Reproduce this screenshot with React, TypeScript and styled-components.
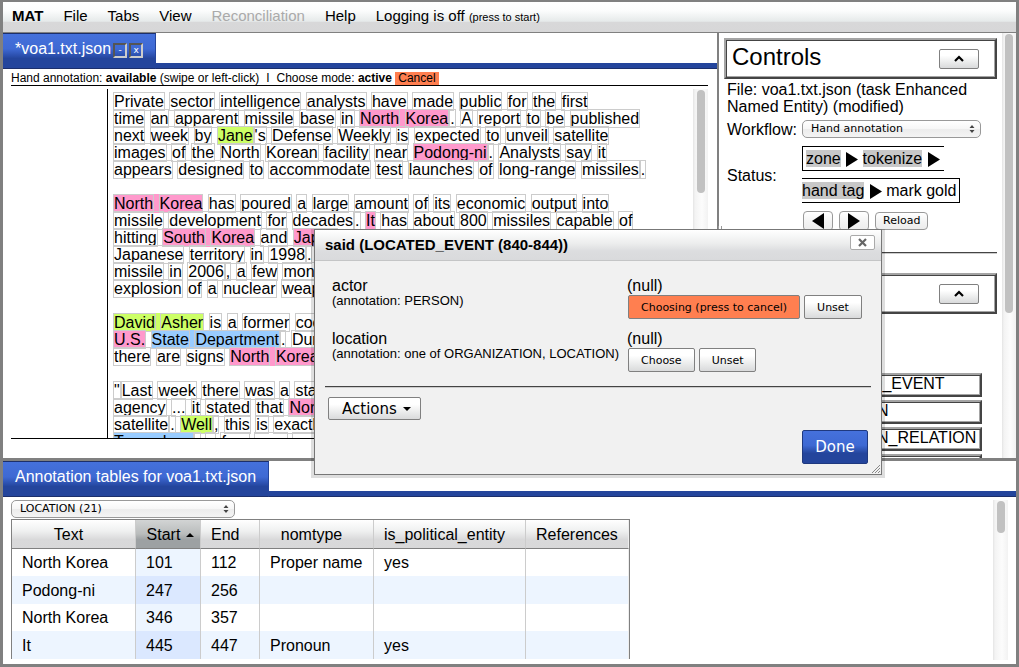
import React from "react";
import styled, { createGlobalStyle } from "styled-components";

const sans = '"Liberation Sans", Arial, Helvetica, sans-serif';
const ui = '"DejaVu Sans", "Lucida Grande", sans-serif';

const Global = createGlobalStyle`
  *, *::before, *::after { box-sizing: border-box; }
  body { margin: 0; background: #808080; color: #000; font: 16px/17px ${sans}; }
  button, select { margin: 0; color: inherit; }
  p, h1, h2, ul, dl, dd { margin: 0; padding: 0; font-weight: normal; }
  ul { list-style: none; }
`;

/* ---------- shell ---------- */

const Shell = styled.div`
  height: 100vh;
  min-height: 480px;
  padding: 2px 3px 3px;
  display: grid;
  grid-template-rows: auto minmax(0, 1fr) 203px;
  overflow: hidden;
`;

const MenuBar = styled.nav`
  display: flex;
  align-items: center;
  gap: 20px;
  height: 31px;
  padding: 0 9px 2px;
  border-bottom: 1px solid #808080;
  background: linear-gradient(#fff 0%, #fbfcfc 30%, #e6eaea 64%, #d8d8d9 68%, #d7d7d8 100%);
`;

const MenuItem = styled.button<{ $bold?: boolean }>`
  padding: 0;
  border: 0;
  background: none;
  font: ${(p) => (p.$bold ? "bold" : "normal")} 15px/18px ${sans};
  white-space: nowrap;
  &:disabled { color: #aaa; }
  small { font-size: 11px; }
`;

const Upper = styled.div`
  display: grid;
  grid-template-columns: minmax(0, 1fr) 2px 297px;
  min-height: 0;
  border-bottom: 3px solid #808080;
`;

const Divider = styled.div`
  position: relative;
  background: #808080;
  &::after {
    content: "";
    position: absolute;
    top: calc(50% - 20px);
    left: 1px;
    width: 4px;
    height: 40px;
    background: #fff;
    border: solid #999;
    border-width: 0 1px;
  }
`;

const Panel = styled.section`
  display: flex;
  flex-direction: column;
  min-width: 0;
  min-height: 0;
  background: #fff;
`;

const TabStrip = styled.div`
  display: flex;
  height: 36px;
  flex: none;
  background: linear-gradient(#fff 30px, #24459c 30px, #24459c 35px, #1c2f6b 35px);
`;

const Tab = styled.div`
  display: flex;
  align-items: center;
  height: 36px;
  padding: 0 12px 6px;
  color: #fff;
  font-size: 16px;
  white-space: nowrap;
  border: solid #1c2f6b;
  border-width: 1px 1px 1px 0;
  border-right-color: #24459c;
  background: linear-gradient(#4571dc 0%, #3e69d3 44%, #2b4fad 64%, #24459c 72%, #24459c 100%);
`;

const TabButton = styled.button`
  width: 14px;
  height: 15px;
  margin: 5px 0 0 2px;
  padding: 0;
  border: 2px solid;
  border-color: #555 #ccc #ccc #555;
  background: none;
  font: 9px/9px ${ui};
`;

/* ---------- scroll bars ---------- */

const Track = styled.div<{ $w: number }>`
  flex: none;
  display: flex;
  justify-content: center;
  width: ${(p) => p.$w}px;
  padding-top: 1px;
  background: linear-gradient(90deg, #e4e4e4 0, #f3f3f3 2px, #fcfcfc 60%, #f2f2f2 100%);
`;

const Thumb = styled.div<{ $h: number }>`
  width: 8px;
  height: ${(p) => p.$h}px;
  border-radius: 4px;
  background: #c1c1c1;
`;

/* ---------- document ---------- */

const DocBody = styled.div`
  flex: 1;
  min-height: 0;
  display: flex;
  flex-direction: column;
  padding: 2px 9px 19px 8px;
`;

const StatusLine = styled.div`
  flex: none;
  height: 15px;
  padding-top: 1px;
  border-bottom: 1px solid #000;
  font-size: 12px;
  line-height: 13px;
  white-space: nowrap;
`;

const Separator = styled.span`
  padding: 0 7px;
`;

const CancelLink = styled.button`
  height: 13px;
  padding: 0 3px;
  border: 0;
  background: #ff7f50;
  font: 12px/13px ${sans};
  vertical-align: bottom;
`;

const DocScroll = styled.div`
  flex: 1;
  min-height: 0;
  display: flex;
  margin-top: 3px;
  padding-left: 96px;
  border-bottom: 1px solid #000;
  overflow: hidden;
`;

const DocText = styled.div`
  flex: 1;
  min-width: 0;
  overflow: hidden;
  padding: 4px 0 0 5px;
  border-left: 1px solid #000;
  white-space: pre;
`;

const Paragraph = styled.p`
  margin-bottom: 17px;
`;

const Token = styled.span`
  border: 1px solid #ccc;
`;

const tints: Record<string, string> = { L: "#ff99cc", P: "#ccff66", O: "#99ccff" };

const Entity = styled.mark<{ $kind: string }>`
  padding: 1px 0;
  color: inherit;
  background: ${(p) => tints[p.$kind]};
`;

/* "|" separates tokens that touch; "{X:...}" marks an entity of kind X */
const paragraphs: string[][] = [
  [
    "Private sector intelligence analysts have made public for the first",
    "time an apparent missile base in {L:North Korea}|. A report to be published",
    "next week by {P:Jane}|'s Defense Weekly is expected to unveil satellite",
    "images of the North Korean facility near {L:Podong-ni}|. Analysts say it",
    "appears designed to accommodate test launches of long-range missiles|.",
  ],
  [
    "{L:North Korea} has poured a large amount of its economic output into",
    "missile development for decades|. {L:It} has about 800 missiles capable of",
    "hitting {L:South Korea} and {L:Japan}",
    "Japanese territory in 1998|.",
    "missile in 2006|, a few months",
    "explosion of a nuclear weapon",
  ],
  [
    "{P:David Asher} is a former coordinator",
    "{L:U.S.} {O:State Department}|. During",
    "there are signs {L:North Korea}",
  ],
  [
    '"|Last week there was a statement',
    "agency ... it stated that {L:North Korea}",
    "satellite|. {P:Well}|, this is exactly",
    "{O:Taepodong}|, a four year run",
  ],
];

function tokens(text: string) {
  return text.split(/([ |])/).map((t, i) => {
    if (t === "" || t === "|") return null;
    return t === " " ? " " : <Token key={i}>{t}</Token>;
  });
}

function Line({ text }: { text: string }) {
  return (
    <>
      {text.split(/(\{\w:[^}]*\})/).map((part, i) => {
        const m = part.match(/^\{(\w):(.*)\}$/);
        return m ? (
          <Entity key={i} $kind={m[1]}>{tokens(m[2])}</Entity>
        ) : (
          <React.Fragment key={i}>{tokens(part)}</React.Fragment>
        );
      })}
      {"\n"}
    </>
  );
}

/* ---------- controls ---------- */

const Side = styled.aside`
  display: flex;
  min-height: 0;
  background: #fff;
`;

const SideContent = styled.div`
  flex: 1;
  min-width: 0;
  overflow: hidden;
  padding: 5px 5px 0;
`;

const bevel = `
  border: 2px solid;
  border-color: #a4a4a4 #444 #444 #a4a4a4;
  box-shadow: inset 1px 1px #444, inset -1px -1px #a4a4a4;
`;

const SectionHead = styled.div`
  ${bevel}
  display: flex;
  align-items: center;
  justify-content: space-between;
  height: 41px;
  padding: 0 16px 0 6px;
`;

const SectionTitle = styled.h2`
  padding-bottom: 4px;
  font-size: 24px;
  line-height: 28px;
`;

const PushButton = styled.button<{ $active?: boolean }>`
  border: 1px solid #808080;
  border-radius: 2px;
  background: ${(p) => (p.$active ? "#ff7f50" : "linear-gradient(#fff 30%, #eceded 65%, #d9dadb)")};
  font: 11px/14px ${ui};
  white-space: nowrap;
`;

const CollapseButton = styled(PushButton)`
  display: flex;
  align-items: center;
  justify-content: center;
  width: 40px;
  height: 20px;
  margin-left: auto;
  padding: 0;
`;

const FileInfo = styled.p`
  padding: 2px 20px 0 3px;
`;

const Fields = styled.div`
  display: grid;
  grid-template-columns: 75px minmax(0, 1fr);
  align-items: center;
  padding-left: 3px;
`;

const SelectBox = styled.div<{ $w: number }>`
  position: relative;
  width: ${(p) => p.$w}px;
  height: 18px;
  svg {
    position: absolute;
    right: 6px;
    top: 5px;
    pointer-events: none;
  }
`;

const Select = styled.select`
  display: block;
  width: 100%;
  height: 18px;
  padding: 0 20px 0 8px;
  appearance: none;
  border: 1px solid #999;
  border-radius: 5px;
  background: linear-gradient(#fff, #f6f6f6 50%, #ececec 50%, #f4f4f4);
  font: 11px/14px ${ui};
`;

const WorkflowCell = styled.div`
  display: flex;
  align-items: center;
  height: 28px;
`;

const Steps = styled.div`
  line-height: 32px;
  white-space: pre;
`;

const StepFrame = styled.span`
  padding: 3px;
  border: 1px solid #000;
`;

const DoneStep = styled.span`
  background: #c8c8c8;
`;

const NavButtons = styled.div`
  display: flex;
  align-items: center;
  gap: 6px;
  height: 45px;
  padding: 4px 0 21px 79px;
`;

const MacButton = styled.button`
  display: flex;
  align-items: center;
  justify-content: center;
  min-width: 30px;
  height: 20px;
  padding: 0 8px;
  border: 1px solid #999;
  border-radius: 4px;
  background: linear-gradient(#fff, #f4f4f4 50%, #ececec);
  font: 11px/14px ${ui};
`;

const ReloadButton = styled(MacButton)`
  height: 18px;
  padding: 0 7px;
`;

const Rule = styled.hr`
  margin: 0;
  border: 0;
  border-top: 1px solid #444;
  border-bottom: 1px solid #ccc;
`;

const SideRule = styled(Rule)`
  margin-bottom: 19px;
`;

const TagList = styled.ul`
  display: grid;
  gap: 3px;
  margin: 59px 15px 0 80px;
`;

const TagBox = styled.li`
  ${bevel}
  height: 24px;
  padding: 0 2px;
  line-height: 18px;
  white-space: nowrap;
`;

/* ---------- annotation table ---------- */

const TableBody = styled.div`
  flex: 1;
  min-height: 0;
  display: flex;
  justify-content: space-between;
  padding: 3px 8px 4px;
`;

const TableScroll = styled.div`
  flex: 1;
  overflow: hidden;
`;

const Table = styled.table`
  width: 619px;
  margin-top: 1px;
  table-layout: fixed;
  border-collapse: separate;
  border-spacing: 0;
  border: solid #808080;
  border-width: 1px 1px 0;
  th, td { text-align: left; font-weight: normal; white-space: nowrap; border-right: 1px solid #ccc; }
  th:last-child, td:last-child { border-right-color: #eee; }
  tbody tr:nth-child(odd) { height: 27px; }
  tbody tr:nth-child(even) { height: 28px; background: #edf5ff; }
`;

const HeadCell = styled.th<{ $w: number; $sorted?: boolean }>`
  width: ${(p) => p.$w}px;
  height: 29px;
  padding: 0 ${(p) => (p.$sorted ? 5 : 20)}px 0 10px;
  && { text-align: center; }
  border-bottom: 1px solid #808080;
  background: ${(p) =>
    p.$sorted
      ? "linear-gradient(#d2d4d4, #b9bcbc 50%, #9da1a3 70%, #9da1a3)"
      : "linear-gradient(#fff 0%, #eff0f0 40%, #d9d9da 70%, #d8d8d9)"};
  svg { margin: 0 0 0 6px; vertical-align: middle; }
`;

const Cell = styled.td<{ $sorted?: boolean }>`
  padding: 0 10px;
  background: ${(p) => (p.$sorted ? "#edf5ff" : "transparent")};
  tr:nth-child(even) > & { background: ${(p) => (p.$sorted ? "#dbe8ff" : "transparent")}; }
`;

const columns = [
  { name: "Text", w: 124 },
  { name: "Start", w: 65 },
  { name: "End", w: 59 },
  { name: "nomtype", w: 114 },
  { name: "is_political_entity", w: 152 },
  { name: "References", w: 103 },
];

const rows = [
  ["North Korea", "101", "112", "Proper name", "yes", ""],
  ["Podong-ni", "247", "256", "", "", ""],
  ["North Korea", "346", "357", "", "", ""],
  ["It", "445", "447", "Pronoun", "yes", ""],
];

/* ---------- dialog window ---------- */

const Dialog = styled.div`
  position: absolute;
  left: 314px;
  top: 229px;
  width: 568px;
  height: 246px;
  display: flex;
  flex-direction: column;
  border: 1px solid #777;
  background: #f1f1f1;
  box-shadow: 0 0 0 3px rgba(0, 0, 0, 0.13);
  clip-path: inset(0 -3px -3px -3px);
`;

const DialogHead = styled.div`
  display: flex;
  justify-content: space-between;
  height: 31px;
  padding: 5px 6px 0 10px;
  border-bottom: 1px solid #c4c5c6;
  background: linear-gradient(#fff, #eceded 45%, #dcdddf 70%, #d9dadc);
`;

const DialogTitle = styled.h1`
  font-size: 15px;
  font-weight: bold;
  line-height: 20px;
`;

const CloseButton = styled.button`
  display: flex;
  align-items: center;
  justify-content: center;
  width: 25px;
  height: 15px;
  padding: 0;
  border: 1px solid #aaa;
  border-radius: 2px;
  background: #fff;
`;

const DialogBody = styled.div`
  flex: 1;
  display: flex;
  flex-direction: column;
  padding: 16px 10px 10px;
`;

const Slots = styled.div`
  display: grid;
  grid-template-columns: 295px minmax(0, 1fr);
  padding: 0 7px;
`;

const SlotCell = styled.div`
  height: 53px;
`;

const SlotHint = styled.p`
  font-size: 13px;
  line-height: 14px;
`;

const SlotButtons = styled.div`
  display: flex;
  gap: 4px;
  padding: 1px;
`;

const SlotButton = styled(PushButton)`
  height: 24px;
  padding: 1px 12px 0;
`;

const DialogRule = styled(Rule)`
  margin-top: 3px;
`;

const ActionsButton = styled(PushButton)`
  display: flex;
  align-items: center;
  align-self: flex-start;
  gap: 6px;
  height: 23px;
  margin: 9px 0 0 3px;
  padding: 0 9px 0 13px;
  font-size: 15px;
`;

const DoneButton = styled.button`
  align-self: flex-end;
  width: 66px;
  height: 34px;
  margin: auto 3px 0 0;
  padding: 0;
  border: 1px solid #1f397f;
  border-radius: 2px;
  color: #fff;
  background: linear-gradient(#4571dc, #3e69d3 45%, #24459c 70%);
  font: 15px/18px ${ui};
`;

const Grip = styled.svg`
  position: absolute;
  right: 1px;
  bottom: 1px;
`;

/* ---------- small drawings ---------- */

const Updown = () => (
  <svg width="6" height="8" viewBox="0 0 6 8" aria-hidden="true">
    <path d="M3 0L5.5 3H.5zM3 8L.5 5h5z" fill="#444" />
  </svg>
);

const Chevron = () => (
  <svg width="10" height="7" viewBox="0 0 10 7" aria-hidden="true">
    <path d="M1 6L5 2L9 6" fill="none" stroke="#000" strokeWidth="2.2" />
  </svg>
);

const StepIcon = styled.svg`
  vertical-align: -3px;
`;

const StepArrow = () => (
  <StepIcon width="13" height="15" viewBox="0 0 13 15" aria-hidden="true">
    <path d="M1 0V15L13 7.5z" fill="#000" />
  </StepIcon>
);

const Play = ({ back }: { back?: boolean }) => (
  <svg width="12" height="16" viewBox="0 0 12 16" aria-hidden="true">
    <path d={back ? "M12 0V16L0 8z" : "M0 0V16L12 8z"} fill="#000" />
  </svg>
);

const Collapse = ({ label }: { label: string }) => (
  <CollapseButton type="button" aria-label={label}><Chevron /></CollapseButton>
);

/* ---------- page ---------- */

export default function App() {
  return (
    <>
      <Global />
      <Shell>
        <MenuBar>
          <MenuItem $bold>MAT</MenuItem>
          <MenuItem>File</MenuItem>
          <MenuItem>Tabs</MenuItem>
          <MenuItem>View</MenuItem>
          <MenuItem disabled>Reconciliation</MenuItem>
          <MenuItem>Help</MenuItem>
          <MenuItem>Logging is off <small>(press to start)</small></MenuItem>
        </MenuBar>

        <Upper>
          <Panel>
            <TabStrip>
              <Tab>
                *voa1.txt.json
                <TabButton aria-label="Minimize">-</TabButton>
                <TabButton aria-label="Close">x</TabButton>
              </Tab>
            </TabStrip>
            <DocBody>
              <StatusLine>
                Hand annotation: <b>available</b> (swipe or left-click)
                <Separator>I</Separator>
                Choose mode: <b>active</b> <CancelLink>Cancel</CancelLink>
              </StatusLine>
              <DocScroll>
                <DocText>
                  {paragraphs.map((lines, i) => (
                    <Paragraph key={i}>
                      {lines.map((l, j) => <Line key={j} text={l} />)}
                    </Paragraph>
                  ))}
                </DocText>
                <Track $w={15}><Thumb $h={103} /></Track>
              </DocScroll>
            </DocBody>
          </Panel>

          <Divider />

          <Side>
            <SideContent>
              <SectionHead>
                <SectionTitle>Controls</SectionTitle>
                <Collapse label="Collapse controls" />
              </SectionHead>
              <FileInfo>File: voa1.txt.json (task Enhanced Named Entity) (modified)</FileInfo>
              <Fields>
                <label htmlFor="workflow">Workflow:</label>
                <WorkflowCell>
                  <SelectBox $w={179}>
                    <Select id="workflow"><option>Hand annotation</option></Select>
                    <Updown />
                  </SelectBox>
                </WorkflowCell>
                <span>Status:</span>
                <Steps>
                  <StepFrame>
                    <DoneStep>zone</DoneStep> <StepArrow /> <DoneStep>tokenize</DoneStep> <StepArrow />{" \n"}
                    <DoneStep>hand tag</DoneStep> <StepArrow /> mark gold
                  </StepFrame>
                </Steps>
              </Fields>
              <NavButtons>
                <MacButton aria-label="Step back"><Play back /></MacButton>
                <MacButton aria-label="Step forward"><Play /></MacButton>
                <ReloadButton>Reload</ReloadButton>
              </NavButtons>
              <SideRule />
              <SectionHead><Collapse label="Collapse section" /></SectionHead>
              <TagList>
                <TagBox>LOCATED_EVENT</TagBox>
                <TagBox>LOCATION</TagBox>
                <TagBox>LOCATION_RELATION</TagBox>
                <TagBox>ORGANIZATION</TagBox>
              </TagList>
            </SideContent>
            <Track $w={14}><Thumb $h={279} /></Track>
          </Side>
        </Upper>

        <Panel>
          <TabStrip>
            <Tab>Annotation tables for voa1.txt.json</Tab>
          </TabStrip>
          <TableBody>
            <TableScroll>
              <SelectBox $w={224}>
                <Select aria-label="Annotation type"><option>LOCATION (21)</option></Select>
                <Updown />
              </SelectBox>
              <Table>
                <thead>
                  <tr>
                    {columns.map((c) => (
                      <HeadCell key={c.name} $w={c.w} $sorted={c.name === "Start"} scope="col">
                        {c.name}
                        {c.name === "Start" && (
                          <svg width="8" height="4" viewBox="0 0 8 4" aria-hidden="true">
                            <path d="M4 0L8 4H0z" />
                          </svg>
                        )}
                      </HeadCell>
                    ))}
                  </tr>
                </thead>
                <tbody>
                  {rows.map((r) => (
                    <tr key={r[1]}>
                      {r.map((v, i) => <Cell key={i} $sorted={i === 1}>{v}</Cell>)}
                    </tr>
                  ))}
                </tbody>
              </Table>
            </TableScroll>
            <Track $w={15}><Thumb $h={32} /></Track>
          </TableBody>
        </Panel>
      </Shell>

      <Dialog role="dialog" aria-labelledby="dialog-title">
        <DialogHead>
          <DialogTitle id="dialog-title">said (LOCATED_EVENT (840-844))</DialogTitle>
          <CloseButton aria-label="Close dialog">
            <svg width="9" height="9" viewBox="0 0 9 9" aria-hidden="true">
              <path d="M1 1L8 8M8 1L1 8" stroke="#666" strokeWidth="2.2" />
            </svg>
          </CloseButton>
        </DialogHead>
        <DialogBody>
          <Slots>
            <SlotCell>
              <p>actor</p>
              <SlotHint>(annotation: PERSON)</SlotHint>
            </SlotCell>
            <SlotCell>
              <p>(null)</p>
              <SlotButtons>
                <SlotButton $active>Choosing (press to cancel)</SlotButton>
                <SlotButton>Unset</SlotButton>
              </SlotButtons>
            </SlotCell>
            <SlotCell>
              <p>location</p>
              <SlotHint>(annotation: one of ORGANIZATION, LOCATION)</SlotHint>
            </SlotCell>
            <SlotCell>
              <p>(null)</p>
              <SlotButtons>
                <SlotButton>Choose</SlotButton>
                <SlotButton>Unset</SlotButton>
              </SlotButtons>
            </SlotCell>
          </Slots>
          <DialogRule />
          <ActionsButton>
            Actions
            <svg width="8" height="4" viewBox="0 0 8 4" aria-hidden="true">
              <path d="M0 0H8L4 4z" />
            </svg>
          </ActionsButton>
          <DoneButton>Done</DoneButton>
        </DialogBody>
        <Grip width="8" height="8" viewBox="0 0 8 8" aria-hidden="true">
          <path d="M0 8L8 0M3 8L8 3M6 8L8 6" stroke="#888" fill="none" />
        </Grip>
      </Dialog>
    </>
  );
}
